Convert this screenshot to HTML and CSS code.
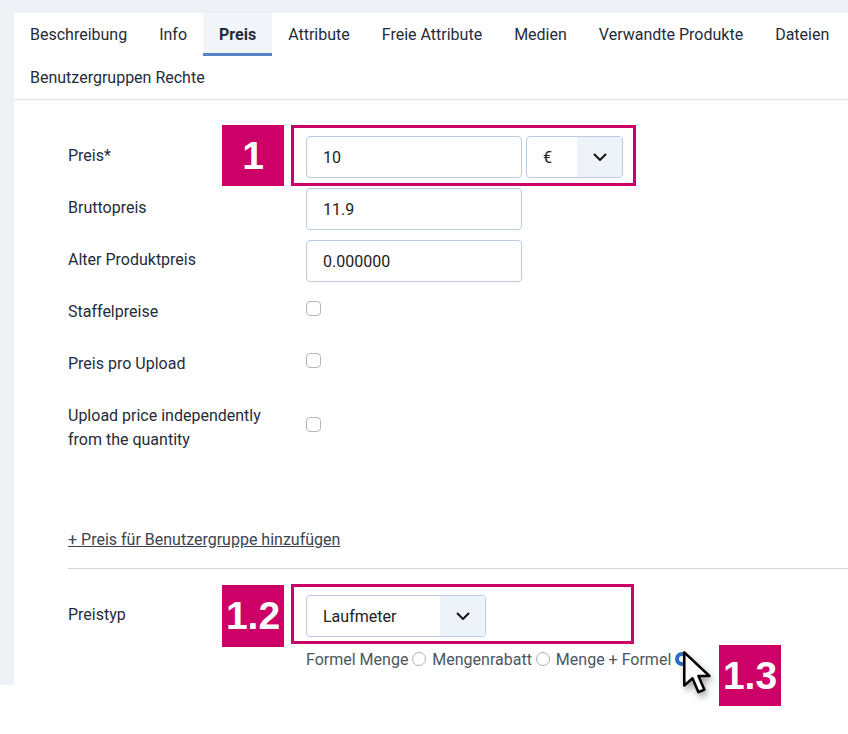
FILE: index.html
```html
<!DOCTYPE html>
<html lang="de">
<head>
    <meta charset="UTF-8">
    <meta name="viewport" content="width=device-width, initial-scale=1.0">
    <title>Produkt bearbeiten - Preis</title>
    <link rel="stylesheet" href="styles.css">
</head>
<body>

<div class="page">
    <div class="panel">
        <ul class="tabs">
            <li class="tab">Beschreibung</li>
            <li class="tab">Info</li>
            <li class="tab active">Preis</li>
            <li class="tab">Attribute</li>
            <li class="tab">Freie Attribute</li>
            <li class="tab">Medien</li>
            <li class="tab">Verwandte Produkte</li>
            <li class="tab">Dateien</li>
            <li class="tab">Benutzergruppen Rechte</li>
        </ul>

        <form class="price-form">
            <div class="form-rows">
                <div class="form-row">
                    <label class="form-label" for="price">Preis*</label>
                    <div class="form-field">
                        <div class="input-group">
                            <input class="form-input" type="text" id="price" value="10">
                            <div class="select select-currency">
                                <span class="select-value">€</span>
                                <span class="select-arrow">
                                    <svg width="14" height="8" viewBox="0 0 14 8"><path d="M1 1 L7 7 L13 1" fill="none" stroke="#111" stroke-width="2"/></svg>
                                </span>
                            </div>
                        </div>
                        <div class="mark-box mark-box-price"></div>
                        <div class="badge badge-price">1</div>
                    </div>
                </div>

                <div class="form-row">
                    <label class="form-label" for="gross">Bruttopreis</label>
                    <div class="form-field">
                        <input class="form-input" type="text" id="gross" value="11.9">
                    </div>
                </div>

                <div class="form-row">
                    <label class="form-label" for="oldPrice">Alter Produktpreis</label>
                    <div class="form-field">
                        <input class="form-input" type="text" id="oldPrice" value="0.000000">
                    </div>
                </div>

                <div class="form-row check-row">
                    <label class="form-label" for="tiers">Staffelpreise</label>
                    <div class="form-field">
                        <input class="form-check" type="checkbox" id="tiers">
                    </div>
                </div>

                <div class="form-row check-row">
                    <label class="form-label" for="perUpload">Preis pro Upload</label>
                    <div class="form-field">
                        <input class="form-check" type="checkbox" id="perUpload">
                    </div>
                </div>

                <div class="form-row check-row">
                    <label class="form-label" for="uploadQty">Upload price independently from the quantity</label>
                    <div class="form-field">
                        <input class="form-check" type="checkbox" id="uploadQty">
                    </div>
                </div>
            </div>

            <a class="add-link" href="#">+ Preis für Benutzergruppe hinzufügen</a>

            <hr class="divider">

            <div class="form-row">
                <label class="form-label">Preistyp</label>
                <div class="form-field">
                    <div class="select select-type">
                        <span class="select-value">Laufmeter</span>
                        <span class="select-arrow">
                            <svg width="14" height="8" viewBox="0 0 14 8"><path d="M1 1 L7 7 L13 1" fill="none" stroke="#111" stroke-width="2"/></svg>
                        </span>
                    </div>
                    <div class="mark-box mark-box-type"></div>
                    <div class="badge badge-type">1.2</div>

                    <div class="radio-row">Formel Menge<input class="radio" type="radio" name="priceType"> Mengenrabatt<input class="radio" type="radio" name="priceType"> Menge + Formel<input class="radio" type="radio" name="priceType" checked>
                        <svg class="cursor" width="32" height="46" viewBox="0 0 14 20">
                            <path d="M1 1 L1 15.5 L4.6 12.3 L7.2 18.4 L9.8 17.3 L7.2 11.3 L12 11.3 Z" fill="#fff" stroke="#000" stroke-width="1.1" stroke-linejoin="round"/>
                        </svg>
                        <div class="badge badge-mode">1.3</div>
                    </div>
                </div>
            </div>
        </form>
    </div>
</div>

</body>
</html>
```

FILE: styles.css
```css
body {
    margin: 0;
    min-height: 100vh;
    background: #fff;
    font-family: Roboto, 'Liberation Sans', sans-serif;
    font-size: 16px;
    color: #1f2c3b;
}

.page {
    background: #edf1f5;
    padding: 13px 0 0 14px;
}

.panel {
    background: #fff;
    padding-bottom: 13px;
}

/* tabs */
.tabs {
    list-style: none;
    margin: 0;
    padding: 0;
    display: flex;
    flex-wrap: wrap;
    border-bottom: 1px solid #dce3ec;
}

.tab {
    padding: 10px 16px 6px;
    line-height: 24px;
    border-bottom: 3px solid transparent;
    white-space: nowrap;
}

.tab.active {
    font-weight: bold;
    background: #f2f5f9;
    border-bottom-color: #5683c3;
}

/* form */
.price-form {
    padding: 36px 0 0 54px;
}

.form-rows {
    display: flex;
    flex-direction: column;
    gap: 10px;
}

.form-row {
    display: flex;
    align-items: flex-start;
}

.form-label {
    width: 214px;
    padding: 8px 24px 10px 0;
    line-height: 24px;
    flex-shrink: 0;
}

.form-field {
    position: relative;
}

.check-row {
    align-items: center;
}

.check-row .form-field {
    margin-top: -9px;
}

.input-group {
    display: flex;
    gap: 4px;
}

.form-input {
    box-sizing: border-box;
    width: 216px;
    height: 42px;
    padding: 0 16px;
    border: 1px solid #bccbe0;
    border-radius: 4px;
    font-family: inherit;
    font-size: 16px;
    color: #222;
    display: block;
    margin: 0;
}

.form-check {
    appearance: none;
    display: block;
    width: 15px;
    height: 15px;
    margin: 0;
    border: 1px solid #b5b5b5;
    border-radius: 4px;
    background: #fff;
}

.select {
    box-sizing: border-box;
    height: 42px;
    display: flex;
    align-items: center;
    border: 1px solid #bccbe0;
    border-radius: 4px;
    overflow: hidden;
    color: #222;
}

.select-value {
    flex: 1;
    padding-left: 16px;
}

.select-arrow {
    height: 100%;
    display: flex;
    align-items: center;
    justify-content: center;
    background: #eef3fa;
}

.select-currency {
    width: 97px;
}

.select-currency .select-arrow {
    width: 45px;
}

.select-type {
    width: 180px;
}

.select-type .select-arrow {
    width: 45px;
}

.add-link {
    display: inline-block;
    margin-top: 66px;
    line-height: 24px;
    color: #3b4450;
    text-decoration: underline;
}

.divider {
    border: none;
    border-top: 1px solid #d6d6d6;
    margin: 16px 0 26px;
}

.radio-row {
    position: relative;
    margin-top: 11px;
    line-height: 24px;
    color: #4b5663;
    white-space: nowrap;
}

.radio {
    appearance: none;
    box-sizing: border-box;
    width: 14px;
    height: 14px;
    margin: 0 2px 0 4px;
    border: 1px solid #b0b0b0;
    border-radius: 50%;
    background: #fff;
    vertical-align: -1px;
}

.radio:checked {
    border: 4px solid #2f6fc0;
}

/* annotations */
.mark-box {
    position: absolute;
    box-sizing: border-box;
    border: 3px solid #cc0066;
}

.mark-box-price {
    left: -15px;
    top: -11px;
    width: 345px;
    height: 61px;
}

.mark-box-type {
    left: -15px;
    top: -11px;
    width: 343px;
    height: 60px;
}

.badge {
    position: absolute;
    width: 62px;
    height: 61px;
    background: #cc0066;
    color: #fff;
    font-family: 'Liberation Sans', Arial, sans-serif;
    font-weight: bold;
    font-size: 39px;
    line-height: 61px;
    text-align: center;
}

.badge-price {
    left: -84px;
    top: -11px;
}

.badge-type {
    left: -84px;
    top: -10px;
    height: 62px;
    line-height: 62px;
}

.badge-mode {
    left: 413px;
    top: -3px;
}

.cursor {
    position: absolute;
    left: 376px;
    top: 2px;
    filter: drop-shadow(2px 4px 3px rgba(0, 0, 0, 0.35));
}
```
